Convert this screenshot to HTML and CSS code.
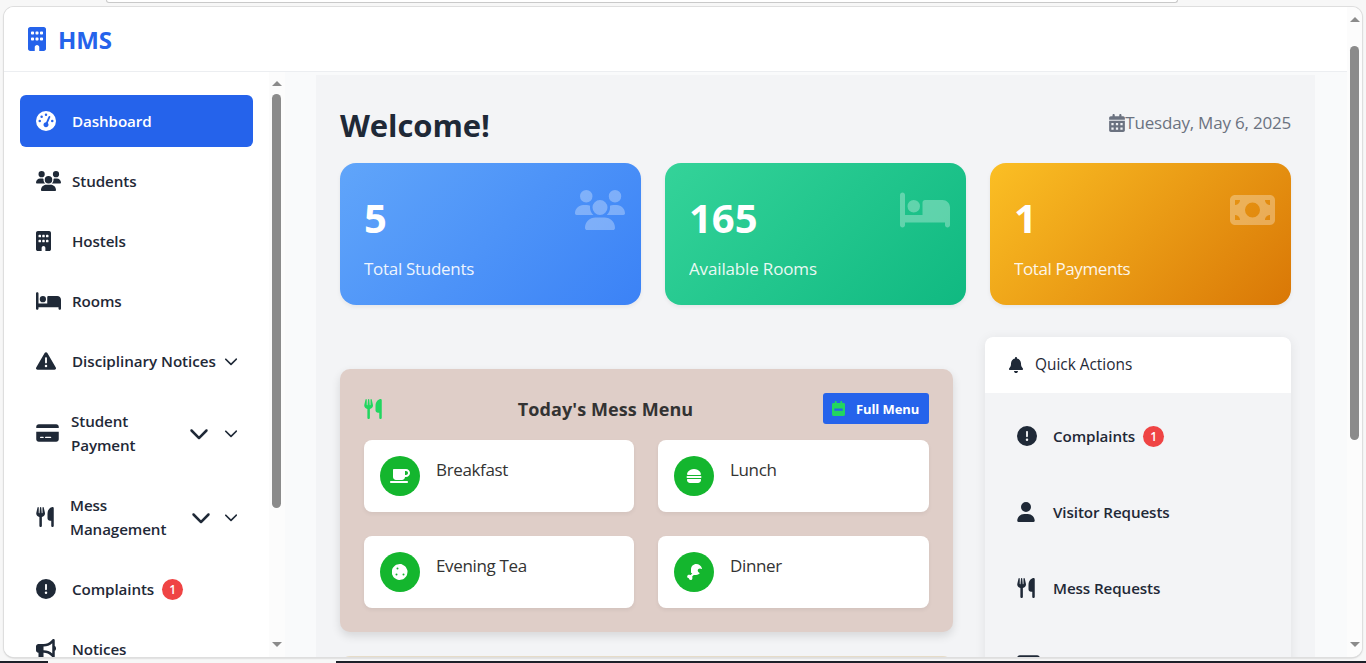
FILE: index.html
```
<!DOCTYPE html>
<html lang="en">
<head>
<meta charset="utf-8">
<title>HMS</title>
<link rel="stylesheet" href="styles.css">
</head>
<body>
<svg class="defs" aria-hidden="true">
  <symbol id="building" viewBox="0 0 384 512"><path d="M48 0C21.500 0 0 21.500 0 48V464c0 26.500 21.500 48 48 48h96V432c0-26.500 21.500-48 48-48s48 21.500 48 48v80h96c26.500 0 48-21.500 48-48V48c0-26.500-21.500-48-48-48H48zM64 240c0-8.800 7.200-16 16-16h32c8.800 0 16 7.200 16 16v32c0 8.800-7.200 16-16 16H80c-8.800 0-16-7.200-16-16V240zm112-16h32c8.800 0 16 7.200 16 16v32c0 8.800-7.200 16-16 16H176c-8.800 0-16-7.200-16-16V240c0-8.800 7.200-16 16-16zm80 16c0-8.800 7.200-16 16-16h32c8.800 0 16 7.200 16 16v32c0 8.800-7.200 16-16 16H272c-8.800 0-16-7.200-16-16V240zM80 96h32c8.800 0 16 7.200 16 16v32c0 8.800-7.200 16-16 16H80c-8.800 0-16-7.200-16-16V112c0-8.800 7.200-16 16-16zm80 16c0-8.800 7.200-16 16-16h32c8.800 0 16 7.200 16 16v32c0 8.800-7.200 16-16 16H176c-8.800 0-16-7.200-16-16V112zM272 96h32c8.800 0 16 7.200 16 16v32c0 8.800-7.200 16-16 16H272c-8.800 0-16-7.200-16-16V112c0-8.800 7.200-16 16-16z"/></symbol>
  <symbol id="gauge" viewBox="0 0 512 512"><path d="M0 256a256 256 0 1 1 512 0A256 256 0 1 1 0 256zM288 96a32 32 0 1 0 -64 0 32 32 0 1 0 64 0zM256 416c35.300 0 64-28.700 64-64c0-17.400-6.900-33.100-18.100-44.600L366 161.700c5.300-12.100-.2-26.300-12.300-31.600s-26.300 .2-31.600 12.300L257.900 288c-.6 0-1.300 0-1.900 0c-35.300 0-64 28.700-64 64s28.700 64 64 64zM176 144a32 32 0 1 0 -64 0 32 32 0 1 0 64 0zM96 288a32 32 0 1 0 0-64 32 32 0 1 0 0 64zm352-32a32 32 0 1 0 -64 0 32 32 0 1 0 64 0z"/></symbol>
  <symbol id="users" viewBox="0 0 640 512"><path d="M144 0a80 80 0 1 1 0 160A80 80 0 1 1 144 0zM512 0a80 80 0 1 1 0 160A80 80 0 1 1 512 0zM0 298.700C0 239.800 47.800 192 106.700 192h42.700c15.900 0 31 3.500 44.600 9.700c-1.300 7.200-1.900 14.700-1.900 22.300c0 38.200 16.800 72.500 43.300 96H21.300C9.600 320 0 310.400 0 298.700zM405.300 320c26.600-23.500 43.300-57.800 43.300-96c0-7.600-.7-15-1.900-22.300c13.600-6.300 28.700-9.700 44.600-9.700h42.700C592.200 192 640 239.800 640 298.700c0 11.800-9.600 21.300-21.300 21.300H405.300zM224 224a96 96 0 1 1 192 0 96 96 0 1 1 -192 0zM128 485.300C128 411.700 187.700 352 261.300 352H378.700C452.300 352 512 411.700 512 485.300c0 14.700-11.900 26.700-26.700 26.700H154.700c-14.700 0-26.700-11.900-26.700-26.700z"/></symbol>
  <symbol id="bed" viewBox="0 0 640 512"><path d="M32 32c17.700 0 32 14.300 32 32V320H288V160c0-17.700 14.300-32 32-32H544c53 0 96 43 96 96V448c0 17.700-14.300 32-32 32s-32-14.300-32-32V416H64v32c0 17.700-14.300 32-32 32s-32-14.300-32-32V64C0 46.300 14.300 32 32 32zm144 96a80 80 0 1 1 0 160 80 80 0 1 1 0-160z"/></symbol>
  <symbol id="warning" viewBox="0 0 512 512"><path d="M256 32c14.200 0 27.300 7.500 34.500 19.800l216 368c7.300 12.400 7.300 27.700 .2 40.100S486.300 480 472 480H40c-14.300 0-27.600-7.700-34.700-20.100s-7-27.800 .2-40.100l216-368C228.700 39.500 241.800 32 256 32zm0 128c-13.300 0-24 10.700-24 24V296c0 13.300 10.700 24 24 24s24-10.700 24-24V184c0-13.300-10.700-24-24-24zm32 224a32 32 0 1 0 -64 0 32 32 0 1 0 64 0z"/></symbol>
  <symbol id="chevron" viewBox="0 0 512 512"><path d="M233.400 406.600c12.500 12.500 32.800 12.500 45.300 0l192-192c12.500-12.500 12.500-32.800 0-45.300s-32.800-12.500-45.300 0L256 338.700 86.600 169.400c-12.500-12.500-32.800-12.500-45.300 0s-12.500 32.800 0 45.300l192 192z"/></symbol>
  <symbol id="card" viewBox="0 0 576 512"><path d="M64 32C28.700 32 0 60.700 0 96v32H576V96c0-35.300-28.700-64-64-64H64zM576 224H0V416c0 35.300 28.700 64 64 64H512c35.300 0 64-28.700 64-64V224zM112 352h64c8.800 0 16 7.200 16 16s-7.200 16-16 16H112c-8.800 0-16-7.200-16-16s7.200-16 16-16zm112 16c0-8.800 7.200-16 16-16H368c8.800 0 16 7.200 16 16s-7.200 16-16 16H240c-8.800 0-16-7.200-16-16z"/></symbol>
  <symbol id="utensils" viewBox="0 0 448 512"><path d="M416 0C400 0 288 32 288 176V288c0 35.300 28.700 64 64 64h32V480c0 17.700 14.300 32 32 32s32-14.300 32-32V32c0-17.700-14.300-32-32-32zM64 16C64 7.800 57.900 1 49.700 .1S34.200 4.600 32.400 12.500L2.100 148.800C.7 155.100 0 161.500 0 167.900c0 45.900 35.100 83.600 80 87.700V480c0 17.700 14.300 32 32 32s32-14.300 32-32V255.600c44.900-4.100 80-41.800 80-87.700c0-6.400-.7-12.800-2.100-19.100L191.600 12.500c-1.800-8-9.300-13.300-17.400-12.400S160 7.800 160 16V150.200c0 5.400-4.400 9.800-9.800 9.800c-5.100 0-9.300-3.900-9.800-9L127.900 14.600C127.200 6.300 120.300 0 112 0s-15.200 6.300-15.900 14.600L83.700 151c-.5 5.100-4.700 9-9.800 9c-5.400 0-9.800-4.400-9.800-9.800V16z"/></symbol>
  <symbol id="alert" viewBox="0 0 512 512"><path d="M256 512A256 256 0 1 0 256 0a256 256 0 1 0 0 512zm0-384c13.300 0 24 10.700 24 24V264c0 13.300-10.700 24-24 24s-24-10.700-24-24V152c0-13.300 10.700-24 24-24zM224 352a32 32 0 1 1 64 0 32 32 0 1 1 -64 0z"/></symbol>
  <symbol id="bullhorn" viewBox="0 0 512 512"><path d="M480 32c0-12.900-7.800-24.600-19.800-29.600s-25.700-2.200-34.900 6.900L381.700 53c-48 48-113.100 75-181 75H64c-35.300 0-64 28.700-64 64v96c0 35.300 28.700 64 64 64v128c0 17.700 14.300 32 32 32h64c17.700 0 32-14.300 32-32V352h8.700c67.900 0 133 27 181 75l43.600 43.600c9.200 9.200 22.900 11.900 34.900 6.900s19.800-16.600 19.800-29.600V300.400c18.600-8.800 32-32.500 32-60.400s-13.400-51.600-32-60.400V32zm-64 76.700V371.300C357.200 317.800 280.500 288 200.700 288H192V192h8.700c79.800 0 156.500-29.800 215.300-83.300z"/></symbol>
  <symbol id="calendar" viewBox="0 0 448 512"><path fill-rule="evenodd" d="M128 0c17.700 0 32 14.300 32 32V64H288V32c0-17.700 14.300-32 32-32s32 14.300 32 32V64h48c26.500 0 48 21.500 48 48v48H0V112C0 85.500 21.500 64 48 64H96V32c0-17.700 14.300-32 32-32zM0 192H448V464c0 26.500-21.500 48-48 48H48c-26.500 0-48-21.500-48-48zM64 256v64h64v-64zM192 256v64h64v-64zM320 256v64h64v-64zM64 384v64h64v-64zM192 384v64h64v-64zM320 384v64h64v-64z"/></symbol>
  <symbol id="agenda" viewBox="0 0 448 512"><path fill-rule="evenodd" d="M128 0c17.700 0 32 14.300 32 32V64H288V32c0-17.700 14.300-32 32-32s32 14.300 32 32V64h48c26.500 0 48 21.500 48 48v48H0V112C0 85.500 21.500 64 48 64H96V32c0-17.700 14.300-32 32-32zM0 160H448V464c0 26.500-21.500 48-48 48H48c-26.500 0-48-21.500-48-48zM80 256v80h288v-80z"/></symbol>
  <symbol id="money" viewBox="0 0 576 512"><path d="M64 64C28.700 64 0 92.700 0 128V384c0 35.300 28.700 64 64 64H512c35.300 0 64-28.700 64-64V128c0-35.300-28.700-64-64-64H64zm64 320H64V320c35.300 0 64 28.700 64 64zM64 192V128h64c0 35.300-28.700 64-64 64zM448 384c0-35.300 28.700-64 64-64v64H448zm64-192c-35.300 0-64-28.700-64-64h64v64zM288 160a96 96 0 1 1 0 192 96 96 0 1 1 0-192z"/></symbol>
  <symbol id="bell" viewBox="0 0 448 512"><path d="M224 0c-17.700 0-32 14.300-32 32V51.200C119 66 64 130.600 64 208v18.800c0 47-17.300 92.400-48.500 127.600l-7.400 8.300c-8.400 9.400-10.400 22.900-5.300 34.400S19.400 416 32 416H416c12.600 0 24-7.400 29.200-18.900s3.100-25-5.300-34.400l-7.400-8.300C401.300 319.200 384 273.900 384 226.800V208c0-77.400-55-142-128-156.800V32c0-17.700-14.300-32-32-32zm45.300 493.300c12-12 18.700-28.300 18.700-45.300H160c0 17 6.700 33.300 18.700 45.300s28.300 18.700 45.300 18.700s33.300-6.700 45.300-18.700z"/></symbol>
  <symbol id="user" viewBox="0 0 448 512"><path d="M224 256A128 128 0 1 0 224 0a128 128 0 1 0 0 256zm-45.700 48C79.800 304 0 383.800 0 482.300C0 498.700 13.300 512 29.700 512H418.300c16.400 0 29.700-13.300 29.700-29.700C448 383.800 368.200 304 269.700 304H178.300z"/></symbol>
  <symbol id="mug" viewBox="0 0 640 512"><path d="M96 64c0-17.700 14.300-32 32-32H512c70.700 0 128 57.300 128 128s-57.300 128-128 128H480c0 53-43 96-96 96H192c-53 0-96-43-96-96V64zM480 224h32c35.300 0 64-28.700 64-64s-28.700-64-64-64H480V224zM32 416H544c17.700 0 32 14.300 32 32s-14.300 32-32 32H32c-17.700 0-32-14.300-32-32s14.300-32 32-32z"/></symbol>
  <symbol id="burger" viewBox="0 0 512 512"><path d="M61 224C45 224 32 211 32 195C38 168 79 32 256 32s218 136 224 163c0 16-13 29-29 29zM48 256H464a32 32 0 0 1 0 64H48a32 32 0 0 1 0-64zM32 368c0-9 7-16 16-16H464c9 0 16 7 16 16v16c0 53-43 96-96 96H128c-53 0-96-43-96-96z"/></symbol>
  <symbol id="cookie" viewBox="0 0 512 512"><path fill-rule="evenodd" d="M247 3c27-4 54 0 78 13l69 37c24 13 44 34 56 59l34 70c12 25 16 52 11 79l-13 77c-5 27-18 52-38 71l-56 54c-20 19-45 31-72 35l-77 11c-27 4-54-1-78-14l-69-37c-24-13-44-33-56-58l-34-70c-12-25-16-52-11-79l14-77c5-27 18-52 38-71l56-54c20-19 45-31 71-35zM208 144a32 32 0 1 0-64 0 32 32 0 1 0 64 0zM176 336a32 32 0 1 0-64 0 32 32 0 1 0 64 0zM368 368a32 32 0 1 0 0-64 32 32 0 1 0 0 64z"/></symbol>
  <symbol id="drumstick" viewBox="0 0 512 512"><path d="M160 265V168C160 75 235 0 328 0c84 0 159 59 180 137 5 18-14 29-29 20-51-31-115 12-102 70 5 25 22 43 47 50 17 5 18 20 8 30-24 28-63 45-108 45h-78l-40 40c-7 7-8 17-5 26 13 43-4 94-52 94-31 0-54-22-57-53-31-3-55-26-55-57 0-48 51-65 95-52 9 3 19 2 26-5l44-44c-22-5-42-18-42-36z"/></symbol>
</svg>
<div class="address-bar"></div>
<div class="window">
  <div class="page">
    <header class="topbar"><svg class="logo"><use href="#building"/></svg><span class="brand">HMS</span></header>
    <div class="body">
      <nav class="sidebar">
        <a class="item active"><svg class="w20"><use href="#gauge"/></svg><span>Dashboard</span></a>
        <a class="item"><svg class="w25"><use href="#users"/></svg><span>Students</span></a>
        <a class="item"><svg class="w15"><use href="#building"/></svg><span>Hostels</span></a>
        <a class="item"><svg class="w25"><use href="#bed"/></svg><span>Rooms</span></a>
        <a class="item notices"><svg class="w20"><use href="#warning"/></svg><span>Disciplinary Notices</span><svg class="chev small"><use href="#chevron"/></svg></a>
        <a class="item tall pay"><svg class="w23"><use href="#card"/></svg><span>Student<br>Payment</span><svg class="chev big"><use href="#chevron"/></svg><svg class="chev small"><use href="#chevron"/></svg></a>
        <a class="item tall mess"><svg class="w18"><use href="#utensils"/></svg><span>Mess<br>Management</span><svg class="chev big"><use href="#chevron"/></svg><svg class="chev small"><use href="#chevron"/></svg></a>
        <a class="item"><svg class="w20"><use href="#alert"/></svg><span>Complaints</span><b class="badge">1</b></a>
        <a class="item"><svg class="w20"><use href="#bullhorn"/></svg><span>Notices</span></a>
      </nav>
      <div class="scroll side-scroll"><i class="up"></i><i class="thumb"></i><i class="down"></i></div>
      <main class="main">
        <div class="title-row"><h1>Welcome!</h1><div class="date"><svg><use href="#calendar"/></svg><span>Tuesday, May 6, 2025</span></div></div>
        <div class="stats">
          <section class="stat blue"><div><strong>5</strong><p>Total Students</p></div><svg class="i50"><use href="#users"/></svg></section>
          <section class="stat green"><div><strong>165</strong><p>Available Rooms</p></div><svg class="i50"><use href="#bed"/></svg></section>
          <section class="stat amber"><div><strong>1</strong><p>Total Payments</p></div><svg class="i45"><use href="#money"/></svg></section>
        </div>
        <div class="columns">
          <div class="left">
            <section class="menu">
              <div class="menu-head"><svg class="fork"><use href="#utensils"/></svg><h2>Today's Mess Menu</h2><button><svg><use href="#agenda"/></svg><span>Full Menu</span></button></div>
              <div class="meals">
                <div class="meal"><i><svg class="w20"><use href="#mug"/></svg></i><span>Breakfast</span></div>
                <div class="meal"><i><svg class="w16"><use href="#burger"/></svg></i><span>Lunch</span></div>
                <div class="meal"><i><svg class="w16"><use href="#cookie"/></svg></i><span>Evening Tea</span></div>
                <div class="meal"><i><svg class="w16"><use href="#drumstick"/></svg></i><span>Dinner</span></div>
              </div>
            </section>
            <section class="next"></section>
          </div>
          <aside class="quick">
            <div class="quick-head"><svg><use href="#bell"/></svg><span>Quick Actions</span></div>
            <a class="action"><svg class="w20"><use href="#alert"/></svg><span>Complaints</span><b class="badge">1</b></a>
            <a class="action"><svg class="w18"><use href="#user"/></svg><span>Visitor Requests</span></a>
            <a class="action"><svg class="w18"><use href="#utensils"/></svg><span>Mess Requests</span></a>
            <a class="action"><svg class="w23"><use href="#card"/></svg></a>
          </aside>
        </div>
      </main>
    </div>
  </div>
  <div class="scroll page-scroll"><i class="up"></i><i class="thumb"></i><i class="down"></i></div>
</div>
<div class="taskbar"><i></i><b></b></div>
</body>
</html>
```
FILE: styles.css
```
* { box-sizing: border-box; }
body {
  margin: 0; width: 1366px; height: 663px; overflow: hidden;
  display: flex; flex-direction: column; background: #f7f7f7;
  font-family: "Open Sans", "Noto Sans", sans-serif; font-size: 16px; line-height: 24px; color: #1f2937;
}
h1, h2, p { margin: 0; }
svg { fill: currentColor; flex: none; display: block; }
.defs { display: none; }
.address-bar {
  height: 3px; width: 1072px; margin: 0 0 4px 106px; flex: none; background: #fff;
  border: 1px solid #c9c9c9; border-top: 0; border-radius: 0 0 8px 8px;
}
.window {
  display: flex; width: 1358px; height: 650px; margin-left: 4px; flex: none; background: #fff;
  border-radius: 10px; overflow: hidden; box-shadow: 0 0 0 1px #dedede, 0 1px 2px #aaa;
}
.page { width: 1343px; display: flex; flex-direction: column; background: #f9fafb; }
.topbar {
  height: 65px; flex: none; display: flex; align-items: center; gap: 12px; padding: 0 24px;
  background: #fff; border-bottom: 1px solid #eceef1; color: #2563eb;
}
.logo { width: 18px; height: 24px; }
.brand { font-size: 24px; font-weight: 700; line-height: 32px; padding-top: 2px; letter-spacing: -.1px; }
.body { display: flex; flex: 1; min-height: 0; }
.sidebar { width: 265px; flex: none; background: #fff; padding: 23px 16px 0; display: flex; flex-direction: column; gap: 8px; overflow: hidden; }
.item {
  height: 52px; flex: none; display: flex; align-items: center; padding: 0 16px; border-radius: 6px;
  font-size: 15.2px; font-weight: 600; letter-spacing: -.1px;
}
.item.notices { letter-spacing: -.04px; }
.item.active { background: #2563eb; color: #fff; }
.item.tall { height: 76px; }
.item > svg:first-child { height: 20px; }
.w15 { width: 15px; margin-right: 21px; }
.w18 { width: 18px; margin-right: 18px; }
.w20 { width: 20px; margin-right: 16px; }
.w23 { width: 23px; margin-right: 13px; }
.w25 { width: 25px; margin-right: 11px; }
.w16 { width: 16px; height: 16px; }
.pay .w23 { margin-right: 12px; }
.mess .w18 { margin-right: 16px; }
.chev.small { width: 14px; height: 14px; margin-left: auto; margin-right: -1px; }
.chev.big { width: 20px; height: 20px; margin-left: auto; }
.chev.big + .chev.small { margin-left: 15px; }
.mess .chev.big + .chev.small { margin-left: 13px; }
.badge {
  width: 21px; height: 21px; border-radius: 50%; background: #ef4444; color: #fff; margin-left: 8px;
  font-size: 12px; line-height: 21px; font-weight: 600; text-align: center; letter-spacing: 0;
}
.scroll { width: 16px; flex: none; background: #fcfcfc; display: flex; flex-direction: column; align-items: center; }
.up, .down { border: 5px solid transparent; width: 0; height: 0; flex: none; }
.up { border-top: 0; border-bottom-color: #8b8b8b; }
.down { border-bottom: 0; border-top-color: #8b8b8b; }
.thumb { width: 9px; border-radius: 5px; background: #8b8b8b; flex: none; }
.side-scroll { padding-top: 9px; padding-right: 1px; }
.side-scroll .thumb { height: 414px; margin: 8px 0 134px; }
.page-scroll { width: 15px; padding-top: 10px; }
.page-scroll .thumb { height: 394px; margin: 24px 0 202px; }
.main { width: 999px; margin: 3px 0 0 31px; padding: 24px 24px 0; background: #f3f4f6; overflow: hidden; }
.title-row { height: 64px; display: flex; justify-content: space-between; align-items: flex-start; }
h1 { font-size: 31px; line-height: 52px; font-weight: 700; letter-spacing: -.1px; }
.date { display: flex; align-items: center; height: 48px; color: #6b7280; font-size: 17px; letter-spacing: -.2px; }
.date svg { width: 16px; height: 18px; }
.stats { display: grid; grid-template-columns: repeat(3, 301px); gap: 24px; }
.stat {
  height: 142px; border-radius: 16px; padding: 31px 16px 0 24px; color: #fff;
  display: flex; justify-content: space-between; align-items: flex-start; box-shadow: 0 2px 4px rgba(0, 0, 0, .06);
}
.stat strong { display: block; font-size: 40px; line-height: 48px; font-weight: 700; }
.stat p { font-size: 17px; line-height: 27px; margin-top: 13px; opacity: .9; letter-spacing: -.3px; }
.stat.green p { letter-spacing: -.15px; }
.stat.amber p { letter-spacing: -.4px; }
.stat svg { height: 40px; margin-top: -4px; opacity: .3; }
.i50 { width: 50px; }
.i45 { width: 45px; }
.blue { background: linear-gradient(135deg, #60a5fa, #3b82f6); }
.green { background: linear-gradient(135deg, #34d399, #10b981); }
.amber { background: linear-gradient(135deg, #fbbf24, #d97706); }
.columns { display: flex; gap: 32px; align-items: flex-start; margin-top: 32px; }
.left { width: 613px; padding-top: 32px; display: flex; flex-direction: column; gap: 24px; }
.menu { height: 263px; border-radius: 10px; background: #dfcec8; padding: 24px 24px 0; box-shadow: 0 4px 10px rgba(0, 0, 0, .12); }
.menu-head { height: 47px; display: flex; justify-content: space-between; align-items: flex-start; color: #333; }
.fork { width: 18px; height: 20px; margin-top: 6px; color: #22d660; }
h2 { font-size: 18px; line-height: 32px; font-weight: 700; letter-spacing: .1px; padding-left: 6px; }
button {
  width: 106px; height: 31px; border: 0; border-radius: 3px; background: #2563eb; color: #fff;
  display: flex; align-items: center; gap: 11px; padding: 0 0 0 9px; font: 700 13px "Open Sans", sans-serif; letter-spacing: -.1px;
}
button svg { width: 13px; height: 15px; color: #22d660; }
.meals { display: grid; grid-template-columns: 270px 271px; gap: 24px; }
.meal { height: 72px; display: flex; gap: 16px; padding: 16px; border-radius: 8px; background: #fff; font-size: 17px; line-height: 27px; letter-spacing: -.35px; color: #333; box-shadow: 0 2px 4px rgba(0, 0, 0, .06); }
.meal i { width: 40px; height: 40px; border-radius: 50%; background: #14b62e; color: #fff; display: flex; align-items: center; justify-content: center; }
.meal svg { height: 16px; margin: 0; }
.next { height: 40px; border-radius: 10px; background: #e6dcc8; }
.quick { width: 306px; height: 400px; border-radius: 8px; overflow: hidden; box-shadow: 0 2px 12px rgba(0, 0, 0, .08); }
.quick-head { height: 56px; display: flex; align-items: center; gap: 12px; padding: 0 24px; background: #fff; border-radius: 8px 8px 0 0; font-size: 15.4px; }
.quick-head svg { width: 14px; height: 16px; }
.action { height: 76px; padding: 10px 32px 0; display: flex; align-items: center; font-size: 15.2px; font-weight: 600; letter-spacing: -.1px; }
.action svg { height: 20px; }
.taskbar { height: 2px; margin-top: 4px; background: #1d2029; display: flex; flex: none; }
.taskbar i { width: 48px; }
.taskbar b { width: 288px; background: #f7f7f7; }
```
